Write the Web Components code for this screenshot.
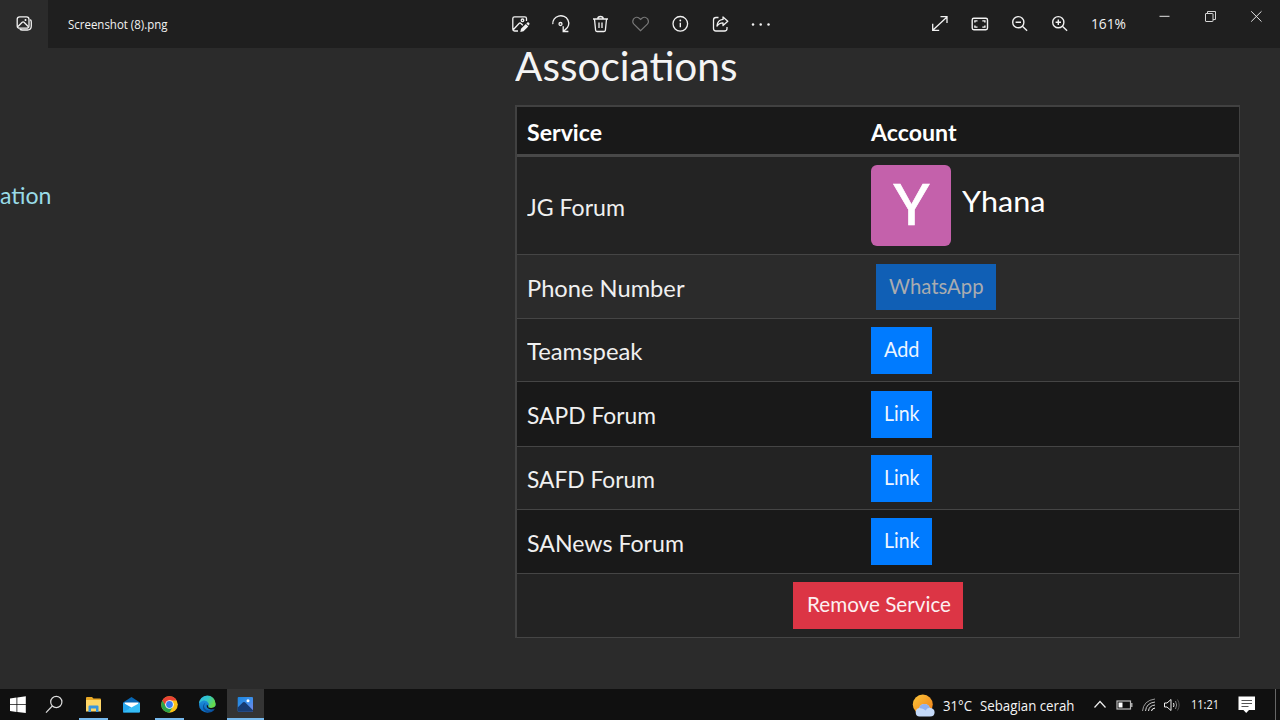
<!DOCTYPE html>
<html lang="id">
<head>
<meta charset="utf-8">
<title>Screenshot (8).png</title>
<style>
  body {
    margin: 0;
    width: 1280px;
    height: 720px;
    overflow: hidden;
    background: #2b2b2b;
    color: #fff;
    font-family: Lato, sans-serif;
  }
</style>
</head>
<body>
<photo-viewer>
  <title-bar slot="top" name="Screenshot (8).png" zoom="161%"></title-bar>
  <side-link><fit-text w="51.5">ation</fit-text></side-link>
  <service-panel></service-panel>
  <task-bar slot="bottom"></task-bar>
</photo-viewer>

<script>
const icons = {
  gallery: `<g fill="none" stroke="#f2f2f2" stroke-width="1.3"><rect x="17.2" y="16.8" width="11.8" height="11.4" rx="2.5"/><path d="M18 26.5l4.2-4.2q.9-.8 1.8 0l4.200 4.200M30.300 19.500q1 1 1 2.500v4q0 4-4 4h-5q-1.600 0-2.500-1"/></g><circle cx="25.500" cy="20" r="1" fill="#fff"/>`,
  edit: `<g fill="none" stroke="#f2f2f2" stroke-width="1.3"><path d="M18 31h-3.500q-1.700 0-1.700-1.700V18.500q0-1.700 1.700-1.700h10.300q1.700 0 1.700 1.700V21M13.500 29.500l5.500-6q1-.9 2 0l1.800 1.800"/><circle cx="22.500" cy="20.300" r="1.300"/></g><path d="M20.300 32l.7-3.200 4.800-4.800 2.500 2.500-4.800 4.800zM26.400 23.400l.8-.8q1-.7 1.900.2t.1 1.900l-.8.8z" fill="#f2f2f2"/>`,
  rotate: `<g fill="none" stroke="#f2f2f2" stroke-width="1.3"><path d="M12.800 24.200a8 7.600 0 1 1 12.500 5.400L23.200 31.500M23.200 26.300v5.200h5.200"/><circle cx="20.500" cy="24" r="1.500"/></g>`,
  trash: `<g fill="none" stroke="#f2f2f2" stroke-width="1.3"><path d="M13 19h15M17.800 18.700q0-2.200 2.700-2.200t2.700 2.200M14.500 19.300l1.100 10.800q.2 1.400 1.500 1.400h6.800q1.300 0 1.500-1.400l1.100-10.800M19 22.500v5.500M22 22.500v5.500"/></g>`,
  heart: `<path d="M20.600 30.700l-6.700-6.600q-2-2.200-.5-4.900 2.700-3.500 6.200-.7l1 1 1-1q3.500-2.800 6.200.7 1.500 2.700-.5 4.900z" fill="none" stroke="#777" stroke-width="1.2"/>`,
  info: `<circle cx="20.300" cy="23.800" r="7.300" fill="none" stroke="#f2f2f2" stroke-width="1.3"/><path d="M20.300 22.700v4.500" stroke="#fff" stroke-width="1.3"/><circle cx="20.300" cy="20.500" r=".9" fill="#fff"/>`,
  share: `<path d="M18.500 17.500H16q-2.500 0-2.500 2.500v8.500q0 2.500 2.500 2.500h8.500q2.500 0 2.500-2.500V27M23 17l4.800 4.200L23 25.500v-2.600q-4 0-6 3.200.3-6 6-6.700z" fill="none" stroke="#f2f2f2" stroke-width="1.3" stroke-linejoin="round"/>`,
  more: `<g fill="#f2f2f2"><circle cx="13" cy="24.500" r="1.250"/><circle cx="20.700" cy="24.500" r="1.250"/><circle cx="28.500" cy="24.500" r="1.250"/></g>`,
  expand: `<path d="M13 30l14-13M20.500 16.600h6.500v6.500M12.700 23.800v6.500h6.500" fill="none" stroke="#f2f2f2" stroke-width="1.3"/>`,
  fit: `<g fill="none" stroke="#f2f2f2" stroke-width="1.4"><rect x="12.200" y="18.300" width="15.300" height="11.400" rx="1.600"/><path d="M14.900 22.500v-1.600h2.600M22.300 20.900h2.600v1.600M24.900 25.500v1.600h-2.600M17.500 27.100h-2.600v-1.600"/></g>`,
  zoomOut: `<g fill="none" stroke="#f2f2f2" stroke-width="1.4"><circle cx="18.300" cy="22.200" r="5.600"/><path d="M22.400 26.300l4.700 4.400M15.600 22.200h5.400"/></g>`,
  zoomIn: `<g fill="none" stroke="#f2f2f2" stroke-width="1.4"><circle cx="18.300" cy="22.200" r="5.600"/><path d="M22.400 26.300l4.700 4.400M15.600 22.200h5.400M18.300 19.500v5.400"/></g>`,
};

const icon = (name, w = 40) => `<svg width="${w}" height="48" viewBox="0 0 ${w} 48">${icons[name]}</svg>`;

// Text squeezed or stretched horizontally to the width in its "w" attribute
class FitText extends HTMLElement {
  constructor() {
    super();
    this.attachShadow({ mode: "open" });
    this.shadowRoot.innerHTML = `
      <style>
        :host { display: block; flex: none; }
        span { display: inline-block; white-space: pre; transform-origin: 0 50%; vertical-align: top; }
      </style>
      <span><slot></slot></span>`;
  }

  connectedCallback() {
    const span = this.shadowRoot.querySelector("span");
    const width = Number(this.getAttribute("w"));
    const real = span.getBoundingClientRect().width;
    this.style.width = width + "px";
    if (real) span.style.transform = `scaleX(${width / real})`;
  }
}

class PhotoViewer extends HTMLElement {
  constructor() {
    super();
    this.attachShadow({ mode: "open" });
    this.shadowRoot.innerHTML = `
      <style>
        :host { display: flex; flex-direction: column; height: 720px; }
        main { flex: 1; display: grid; grid-template-columns: 515px 725px; min-height: 0; }
      </style>
      <slot name="top"></slot>
      <main><slot></slot></main>
      <slot name="bottom"></slot>`;
  }
}

class TitleBar extends HTMLElement {
  constructor() {
    super();
    this.attachShadow({ mode: "open" });
    this.shadowRoot.innerHTML = `
      <style>
        :host {
          display: grid;
          grid-template-columns: 48px 452px 419.5px 221.5px 139px;
          height: 48px;
          background: #1f1f1f;
          color: #f2f2f2;
          font-family: "Open Sans", "Noto Sans", sans-serif;
        }
        svg { display: block; }
        .app { background: #2b2b2b; }
        .name { padding-left: 19.5px; font-size: 12.4px; line-height: 49px; }
        .tools { display: flex; }
        .zoom { font-size: 13.6px; line-height: 47px; margin-left: 11px; }
        .window { display: flex; }
      </style>
      <div class="app">${icon("gallery", 48)}</div>
      <div class="name"><fit-text w="99.5">${this.getAttribute("name")}</fit-text></div>
      <div class="tools">${["edit", "rotate", "trash", "heart", "info", "share", "more"].map(n => icon(n)).join("")}</div>
      <div class="tools">
        ${["expand", "fit", "zoomOut", "zoomIn"].map(n => icon(n)).join("")}
        <fit-text class="zoom" w="35">${this.getAttribute("zoom")}</fit-text>
      </div>
      <div class="window">
        <svg width="46" height="32"><path d="M18.500 16.300h10" stroke="#e5e5e5"/></svg>
        <svg width="46" height="32"><g fill="none" stroke="#d5d5d5"><rect x="18.500" y="13.500" width="7.500" height="8" rx=".5"/><path d="M20.500 13.500v-2h8v8h-2.500"/></g></svg>
        <svg width="46" height="32"><path d="M18.200 11.300l10.300 10.300M28.500 11.300L18.200 21.600" stroke="#e5e5e5"/></svg>
      </div>`;
  }
}

class SideLink extends HTMLElement {
  constructor() {
    super();
    this.attachShadow({ mode: "open" });
    this.shadowRoot.innerHTML = `
      <style>
        :host { display: block; padding-top: 132px; font-size: 23px; line-height: 31px; color: #99dbe8; }
      </style>
      <slot></slot>`;
  }
}

class ActionButton extends HTMLElement {
  constructor() {
    super();
    this.attachShadow({ mode: "open" });
    this.shadowRoot.innerHTML = `
      <style>
        :host { display: block; }
        button {
          display: block;
          height: 47px;
          padding: 0 13px 3px 12.5px;
          border: 0;
          background: #007bff;
          color: #eef5ff;
          font: 20.3px/44px Lato, sans-serif;
        }
        :host([disabled]) button { height: 46px; background: #105fb5; color: #a9acb0; }
        :host([danger]) button { background: #dc3545; color: #fdf0f1; }
      </style>
      <button><slot></slot></button>`;
  }
}

class ServiceRow extends HTMLElement {
  constructor() {
    super();
    this.attachShadow({ mode: "open" });
    this.shadowRoot.innerHTML = `
      <style>
        :host {
          display: grid;
          grid-template-columns: 354px 1fr;
          align-items: center;
          box-sizing: border-box;
          height: 64px;
          border-bottom: 1px solid #454545;
          background: #232323;
          font-size: 22.9px;
          line-height: 30px;
          color: #f0f0f0;
        }
        :host([head]) {
          height: 50px;
          padding-top: 2px;
          border-bottom: 3px solid #484848;
          background: #191919;
          font-weight: 700;
          color: #fff;
        }
        :host([dark]) { background: #191919; }
        :host([plain]) { background: #2b2b2b; }
        .service { padding: 2px 0 0 9.7px; }
        :host([head]) .service { padding-top: 0; }
      </style>
      <div class="service"><slot name="service"></slot></div>
      <div><slot></slot></div>`;
  }
}

class ForumUser extends HTMLElement {
  constructor() {
    super();
    this.attachShadow({ mode: "open" });
    this.shadowRoot.innerHTML = `
      <style>
        :host { display: flex; }
        .avatar {
          display: flex;
          justify-content: center;
          width: 80.4px;
          height: 80.4px;
          border-radius: 6px;
          background: #c461ab;
          color: #fff;
          font: 56.5px/82px Roboto, sans-serif;
          -webkit-text-stroke: .6px #fff;
        }
        .name { margin: 16px 0 0 11px; font-size: 29.3px; line-height: 40px; color: #fff; }
      </style>
      <div class="avatar"><fit-text w="37">Y</fit-text></div>
      <div class="name"><fit-text w="83.5">Yhana</fit-text></div>`;
  }
}

class ServicePanel extends HTMLElement {
  constructor() {
    super();
    this.attachShadow({ mode: "open" });
    const row = (name, w, height, flags, account) => `
      <service-row ${flags} style="height:${height}px"><fit-text slot="service" w="${w}">${name}</fit-text>${account}</service-row>`;
    const button = (label, w, flags = "") => `<action-button ${flags}><fit-text w="${w}">${label}</fit-text></action-button>`;

    this.shadowRoot.innerHTML = `
      <style>
        :host { display: block; }
        h1 { margin: 0; height: 57px; font-size: 40px; line-height: 36px; font-weight: 400; color: #f4f4f4; }
        .table { border: 2px solid #414141; border-width: 2px 1px 0 2px; }
        action-button { width: max-content; }
        [disabled] { margin-left: 5px; }
        .foot {
          display: flex;
          justify-content: center;
          align-items: center;
          height: 63px;
          background: #232323;
          border-bottom: 1px solid #454545;
        }
      </style>
      <h1><fit-text w="222.5">Associations</fit-text></h1>
      <div class="table">
        ${row("Service", 75, 50, "head", `<fit-text w="85.5">Account</fit-text>`)}
        ${row("JG Forum", 98, 98, "", "<forum-user></forum-user>")}
        ${row("Phone Number", 157.5, 64, "plain", button("WhatsApp", 94.5, "disabled"))}
        ${row("Teamspeak", 115.5, 63, "", button("Add", 35.5))}
        ${row("SAPD Forum", 129, 65, "dark", button("Link", 35.5))}
        ${row("SAFD Forum", 128, 63, "", button("Link", 35.5))}
        ${row("SANews Forum", 157, 64, "dark", button("Link", 35.5))}
        <div class="foot">${button("Remove Service", 144, "danger")}</div>
      </div>`;
  }
}

class TaskBar extends HTMLElement {
  constructor() {
    super();
    this.attachShadow({ mode: "open" });
    this.shadowRoot.innerHTML = `
      <style>
        :host {
          display: flex;
          justify-content: space-between;
          height: 31px;
          background: #101010;
          color: #f5f5f5;
          font-family: "Open Sans", "Noto Sans", sans-serif;
        }
        svg { display: block; flex: none; }
        .apps, .tray { display: flex; }
        .open { box-shadow: inset 0 -2px #76b9ed; margin: 0 4.5px; width: 29px; }
        .active { background: #343434; box-shadow: inset 0 -2px #76b9ed; margin-left: 1px; }
        .tray { width: 368px; }
        fit-text { font-size: 14px; line-height: 33px; }
        .temp { margin-left: 7px; }
        .sky { margin-left: 8px; }
        .time { font-size: 12.6px; line-height: 32px; margin-left: 9.5px; margin-right: .5px; }
      </style>
      <div class="apps">
        <svg width="36" height="31"><path d="M10 9.500l6.500-.9v6.700H10zM17.300 8.500l8.500-1.300v8.100h-8.500zM10 16.100h6.500v6.800L10 22zM17.300 16.100h8.500v8l-8.500-1.200z" fill="#fff"/></svg>
        <svg width="38" height="31"><g fill="none" stroke="#ddd" stroke-width="1.2"><circle cx="20.300" cy="13" r="5.600"/><path d="M16.300 17l-6.300 6.600"/></g></svg>
        <svg class="open" width="29" height="31"><path d="M7 9q0-1 1-1h5l1.500 1.500H21q1 0 1 1V21H7z" fill="#e9a927"/><path d="M7 11h15v11.500H7z" fill="#ffd768"/><path d="M9.500 23v-5.500q0-1 1-1h8q1 0 1 1V23H17v-3.500h-5V23z" fill="#3a96dd"/></svg>
        <svg width="38" height="31"><path d="M11 13.500l8.500-5.500 8.500 5.500v9q0 1-1 1H12q-1 0-1-1z" fill="#0866b3"/><path d="M12.500 13.500h14v4l-7 3.500-7-3.500z" fill="#fff"/><path d="M11 13.800l8.500 4.700-8 5q-.5-.3-.5-1z" fill="#25a5ed"/><path d="M28 13.800v8.700q0 1-1 1H12q-.6 0-.8-.4z" fill="#35bdf6"/></svg>
        <svg class="open" width="29" height="31"><circle cx="14.500" cy="15.500" r="8.300" fill="#fbc116"/><path d="M7.300 11.400a8.300 8.300 0 0 1 14.400 0h-7.200l-3.500 6z" fill="#ea4335"/><path d="M7.300 11.400a8.300 8.300 0 0 0 7 12.400l3.700-6.300H11z" fill="#2aa34a"/><circle cx="14.500" cy="15.500" r="4.300" fill="#fff"/><circle cx="14.500" cy="15.500" r="3.400" fill="#3a7df0"/></svg>
        <svg width="38" height="31">
          <defs>
            <linearGradient id="sea" x1="0" y1="0" x2="1" y2=".5"><stop stop-color="#2bb5e8"/><stop offset=".5" stop-color="#31c5c9"/><stop offset="1" stop-color="#68db45"/></linearGradient>
            <linearGradient id="deep" x1="0" y1="0" x2="0" y2="1"><stop stop-color="#239be5"/><stop offset="1" stop-color="#0968bd"/></linearGradient>
          </defs>
          <circle cx="19.300" cy="15.500" r="8.300" fill="url(#deep)"/>
          <path d="M11 15a8.300 8.300 0 0 1 16.600-.3q0 4.300-4.600 4.300-3.600-.1-2.700-1.700 1-1.500.3-3-1.600-3.200-5.200-2.700-3 .6-4.400 3.400z" fill="url(#sea)"/>
          <path d="M17.500 13.800q-3.500 4 1 6.900 3.500 1.800 7.600-.4l.8-.2q-1.500 2.300-3.900 3.100-6 .6-7.900-3.800-.7-3.900 2.400-5.600z" fill="#0b4f9a"/>
          <path d="M18.900 15.500q-1 3.600 3.100 4.700 2.500.7 5-.5l1.500 1.500L30 18l-2.500-.7q-2 1.800-4.500 1.700-3.600-.1-2.700-1.700z" fill="#101010"/>
        </svg>
        <svg class="active" width="37" height="31">
          <defs><linearGradient id="pic" x1="0" y1="0" x2="1" y2="1"><stop stop-color="#1b86e0"/><stop offset=".5" stop-color="#3b8fea"/><stop offset="1" stop-color="#7c84e6"/></linearGradient></defs>
          <rect x="10.700" y="8" width="15.300" height="14.800" rx="1" fill="url(#pic)"/>
          <path d="M10.700 18.500l5.300-5.200q1-.8 2 0l8 8v.5q0 1-1 1H11.700q-1 0-1-1z" fill="#173c73"/>
          <circle cx="21" cy="11.700" r="1.500" fill="#fff"/>
        </svg>
      </div>
      <div class="tray">
        <svg width="24" height="31">
          <defs><linearGradient id="sun" x1="0" y1="0" x2="1" y2="1"><stop stop-color="#fcc63a"/><stop offset="1" stop-color="#ee7b17"/></linearGradient></defs>
          <circle cx="10.800" cy="15.500" r="10" fill="url(#sun)"/>
          <path d="M7.500 27.500a4.300 4.300 0 0 1-.3-8.500 5.500 5.500 0 0 1 10.500-.3q4.900.5 4.900 4.600 0 4.200-4.500 4.200z" fill="#c5daf9"/>
          <path d="M7.200 19a5.500 5.500 0 0 1 10.500-.3q-3 .3-4 2.800-2.500-2.500-6.500-2.500z" fill="#8fb1f2"/>
        </svg>
        <fit-text class="temp" w="29">31°C</fit-text>
        <fit-text class="sky" w="94.5">Sebagian cerah</fit-text>
        <svg width="107" height="31" viewBox="1075 0 107 31">
          <g fill="none" stroke="#eee">
            <path d="M1094.500 18.500l5.500-6 5.500 6" stroke-width="1.2"/>
            <rect x="1117" y="12" width="13.500" height="8" stroke="#bbb" stroke-width="1.200"/>
            <path d="M1131.800 14v4" stroke="#bbb" stroke-width="1.300"/>
            <g stroke="#999"><path d="M1142.500 22q1-10.500 12.500-12"/><path d="M1145.500 22q.8-8 9.500-9" stroke="#ccc"/><path d="M1148.500 22q.5-5.300 6.500-6" stroke="#ddd"/><path d="M1151.500 22q.2-2.500 3.500-3" stroke="#fff"/></g>
            <path d="M1164.500 14h2.500l4-3.500v11l-4-3.500h-2.500z"/>
            <path d="M1173.500 14q1 2 0 4"/>
            <path d="M1175.500 12q2.300 4 0 8" stroke="#888"/>
            <path d="M1177.500 10.500q3.300 5.500 0 11" stroke="#555"/>
          </g>
          <path d="M1118.500 13.500h4v5h-4z" fill="#fff"/>
        </svg>
        <fit-text class="time" w="28">11:21</fit-text>
        <svg width="60" height="31" viewBox="1220 0 60 31">
          <path d="M1238.500 7.500h16.500v13.500h-6l-2.800 3-2.800-3h-4.900z" fill="#fff"/>
          <path d="M1241.500 11.500h10.500M1241.500 14.500h10.500M1241.500 17.500h7" stroke="#555"/>
          <path d="M1275.500 0v31" stroke="#666"/>
        </svg>
      </div>`;
  }
}

customElements.define("photo-viewer", PhotoViewer);
customElements.define("title-bar", TitleBar);
customElements.define("side-link", SideLink);
customElements.define("action-button", ActionButton);
customElements.define("service-row", ServiceRow);
customElements.define("forum-user", ForumUser);
customElements.define("service-panel", ServicePanel);
customElements.define("task-bar", TaskBar);
// Last, so that every text is already laid out when it is measured
customElements.define("fit-text", FitText);
</script>
</body>
</html>
